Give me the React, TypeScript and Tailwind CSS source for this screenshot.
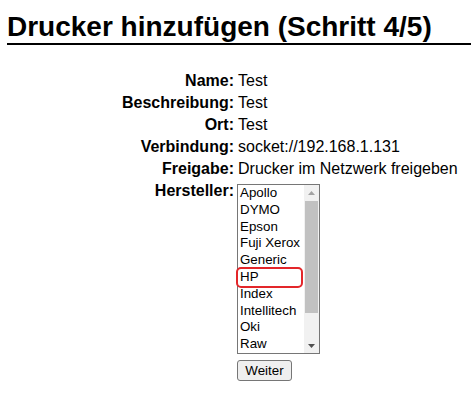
import React from "react";

const rows: [string, string][] = [
  ["Name:", "Test"],
  ["Beschreibung:", "Test"],
  ["Ort:", "Test"],
  ["Verbindung:", "socket://192.168.1.131"],
  ["Freigabe:", "Drucker im Netzwerk freigeben"],
];

const makers = ["Apollo", "DYMO", "Epson", "Fuji Xerox", "Generic", "HP", "Index", "Intellitech", "Oki", "Raw"];

export default function App() {
  return (
    <div className="relative w-[471px] h-[393px] overflow-hidden bg-white text-black font-['Liberation_Sans',Arial,sans-serif]">
      <h2 className="ml-[7px] mt-[11px] border-b-2 border-black text-[28px] leading-[32px] font-bold whitespace-nowrap">
        Drucker hinzufügen (Schritt 4/5)
      </h2>
      <div className="mt-[25px] flex flex-col text-[16px]">
        {rows.map(([l, v]) => (
          <div key={l} className="flex h-[22px] leading-[22px]">
            <div className="w-[234px] text-right font-bold">{l}</div>
            <div className="ml-[4px] whitespace-nowrap">{v}</div>
          </div>
        ))}
        <div className="flex items-start">
          <div className="w-[234px] h-[22px] leading-[22px] text-right font-bold">Hersteller:</div>
          <div className="ml-[3px] flex flex-col items-start">
            <div className="mt-[4px] flex w-[83px] h-[170px] border border-[#767676] bg-white overflow-hidden">
              <div className="flex-1 pl-[2px] text-[13.33px] leading-[16.8px] overflow-hidden">
                {makers.map((m) => (
                  <div key={m} className="h-[16.8px] whitespace-nowrap">{m}</div>
                ))}
              </div>
              <div className="w-[15px] h-full bg-[#f1f1f1] flex flex-col">
                <div className="h-[15px] flex items-center justify-center">
                  <svg width="7" height="4" viewBox="0 0 7 4">
                    <polygon points="0,4 7,4 3.5,0" fill="#a3a3a3" />
                  </svg>
                </div>
                <div className="mx-[1px] mt-[1px] h-[112px] bg-[#c1c1c1]" />
                <div className="flex-1" />
                <div className="h-[15px] flex items-center justify-center">
                  <svg width="7" height="4" viewBox="0 0 7 4">
                    <polygon points="0,0 7,0 3.5,4" fill="#505050" />
                  </svg>
                </div>
              </div>
            </div>
            <button className="mt-[6px] w-[55px] h-[21px] border border-[#767676] bg-[#efefef] rounded-[3px] text-[13.33px] leading-none text-black">
              Weiter
            </button>
          </div>
        </div>
      </div>
      <div className="absolute left-[236px] top-[267px] w-[67px] h-[21px] border-2 border-[#e3262a] rounded-[5px]" />
    </div>
  );
}
